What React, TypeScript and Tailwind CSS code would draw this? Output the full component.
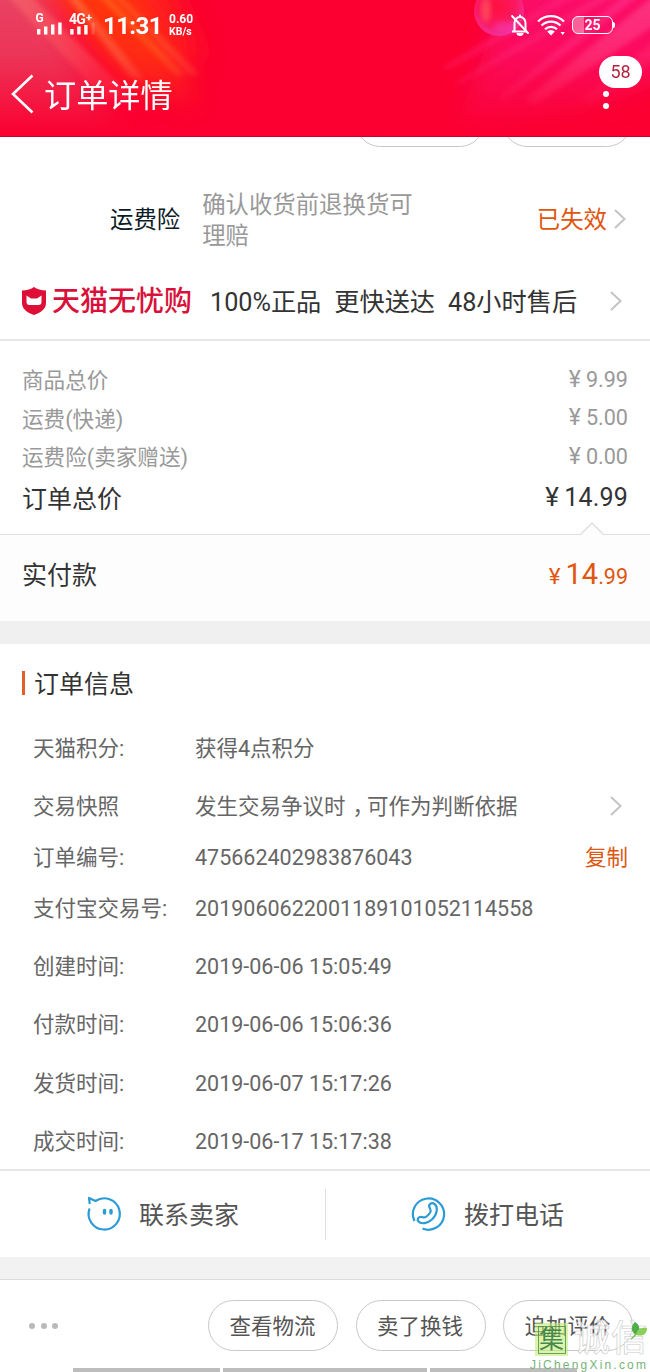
import type { ReactNode } from 'react'
import clsx from 'clsx'

interface PriceLine {
  label: string
  value: string
}

interface InfoLine {
  label: string
  value: ReactNode
  height: string
  action?: 'arrow' | 'copy'
}

const PRICES: PriceLine[] = [
  { label: '商品总价', value: '9.99' },
  { label: '运费(快递)', value: '5.00' },
  { label: '运费险(卖家赠送)', value: '0.00' },
]

const INFO: InfoLine[] = [
  { label: '天猫积分:', value: '获得4点积分', height: 'h-[58px]' },
  {
    label: '交易快照',
    // the comma sits in the middle of its cell
    value: (
      <>
        发生交易争议时<span className="relative left-[7px]">，</span>可作为判断依据
      </>
    ),
    height: 'h-[58px]',
    action: 'arrow',
  },
  { label: '订单编号:', value: '475662402983876043', height: 'h-11', action: 'copy' },
  { label: '支付宝交易号:', value: '2019060622001189101052114558', height: 'h-[58px]' },
  { label: '创建时间:', value: '2019-06-06 15:05:49', height: 'h-[58px]' },
  { label: '付款时间:', value: '2019-06-06 15:06:36', height: 'h-[58px]' },
  { label: '发货时间:', value: '2019-06-07 15:17:26', height: 'h-[59px]' },
  { label: '成交时间:', value: '2019-06-17 15:17:38', height: 'h-[57px]' },
]

const BUTTONS = ['查看物流', '卖了换钱', '追加评价']

function Arrow() {
  return (
    <svg width="12" height="20" viewBox="0 0 12 20" fill="none" stroke="#c4c4c4" strokeWidth="2" className="shrink-0">
      <path d="M1 1l9.5 9L1 19" />
    </svg>
  )
}

function HeaderArt() {
  return (
    <svg width="650" height="137" viewBox="0 0 650 137" className="absolute inset-0">
      <defs>
        <filter id="soft" x="-30%" y="-50%" width="160%" height="200%">
          <feGaussianBlur stdDeviation="12" />
        </filter>
        <filter id="thin" x="-20%" y="-20%" width="140%" height="140%">
          <feGaussianBlur stdDeviation="2.5" />
        </filter>
        <linearGradient id="fade" x1="0" y1="0" x2="0" y2="1">
          <stop offset="0" stopColor="#fff" />
          <stop offset="0.4" stopColor="#fff" stopOpacity="0.8" />
          <stop offset="1" stopColor="#fff" stopOpacity="0" />
        </linearGradient>
        <mask id="down">
          <rect width="650" height="137" fill="url(#fade)" />
        </mask>
        <radialGradient id="ball" cx="0.45" cy="0.4" r="0.6">
          <stop offset="0" stopColor="#ff1040" />
          <stop offset="0.65" stopColor="#fb1860" />
          <stop offset="1" stopColor="#f0309a" />
        </radialGradient>
      </defs>
      <rect width="650" height="137" fill="#fb0030" />
      <g mask="url(#down)">
        <g filter="url(#soft)">
          <path d="M-40 -40H24L120 137H-40Z" fill="#e84262" />
          <path d="M20 -40H130L200 110L130 90Z" fill="#ff3510" />
          <path d="M115 -40H160L205 60L175 60Z" fill="#ff1c1c" />
          <path d="M520 -40H700V70L520 137H450Z" fill="#fb0868" />
        </g>
        <g filter="url(#thin)">
          <path d="M6 -5H30L135 100L105 100Z" fill="#ff7a70" opacity="0.4" />
          <path d="M66 -5H76L145 80L130 76Z" fill="#ff8a50" opacity="0.5" />
          <path d="M98 -5H106L185 75L176 76Z" fill="#ff8a20" opacity="0.45" />
          <path d="M112 -5H120L200 75L190 75Z" fill="#ff7030" opacity="0.45" />
          <path d="M560 -5H580L450 70L440 68Z" fill="#ff2080" opacity="0.4" />
          <path d="M600 -5H616L460 85L454 83Z" fill="#ff3f90" opacity="0.35" />
          <path d="M625 -5H640L505 100L498 98Z" fill="#ff3f9a" opacity="0.45" />
          <path d="M655 -5V25L535 105L525 100Z" fill="#ff5aa0" opacity="0.45" />
          <path d="M655 40V60L590 105L580 100Z" fill="#ff4a90" opacity="0.3" />
        </g>
      </g>
      <circle cx="499" cy="11" r="25" fill="url(#ball)" />
      <ellipse cx="486" cy="10" rx="5" ry="12" fill="#ff7060" opacity="0.5" filter="url(#thin)" />
      <ellipse cx="506" cy="27" rx="13" ry="6" fill="#f440c0" opacity="0.45" filter="url(#thin)" />
    </svg>
  )
}

function StatusBar() {
  return (
    <div className="relative flex h-[50px] items-center justify-between pr-[35px] pl-[35px] text-white">
      <div className="flex items-center">
        <svg width="62" height="26" viewBox="0 0 62 26" fill="#fff" className="font-[Roboto,sans-serif] font-bold">
          <text x="0.500" y="9.500" fontSize="12">G</text>
          <text x="34" y="12" fontSize="14" letterSpacing="-0.8">4G</text>
          <text x="51" y="9" fontSize="11">+</text>
          <rect x="2" y="17" width="3.400" height="5.500" />
          <rect x="9" y="14.500" width="3.400" height="8" />
          <rect x="16" y="12.500" width="3.400" height="10" />
          <rect x="23.200" y="10.500" width="3.400" height="12" />
          <rect x="35.200" y="17" width="3.400" height="5.500" />
          <rect x="42.200" y="14.500" width="3.400" height="8" />
          <rect x="49.200" y="13" width="3.400" height="9.500" />
          <rect x="56.500" y="10.500" width="3.400" height="12" opacity="0.15" />
        </svg>
        <span className="ml-1.5 w-[66px] pt-0.5 text-[24px] leading-7 font-bold tracking-[-0.600px]">11:31</span>
        <span className="pt-px text-[12px] leading-[12px] font-bold">
          0.60
          <br />
          <span className="text-[10.500px]">KB/s</span>
        </span>
      </div>
      <div className="flex items-center gap-[7px]">
        <svg width="20" height="24" viewBox="0 0 20 24" fill="none" stroke="#fff" strokeWidth="2">
          <path d="M4.500 18V10a5.500 6 0 0 1 11 0v8M2 18.500h15" />
          <path d="M10 4V2.500M2 3l16 17" strokeLinecap="round" />
          <path d="M6.500 20a3.500 3 0 0 0 7 0z" fill="#fff" stroke="none" />
        </svg>
        <svg width="28" height="22" viewBox="0 0 28 22" fill="none" stroke="#fff" strokeWidth="2.200">
          <path d="M1 7.500a18.500 18.500 0 0 1 26 0M4.500 11.500a13.500 13.500 0 0 1 19 0M8 15.300a8.600 8.600 0 0 1 12 0" />
          <path d="M14 21.500l-3.800-4a5.400 5.400 0 0 1 7.600 0zM23.500 18h4.400l-2.200 3z" fill="#fff" stroke="none" />
        </svg>
        <div className="flex items-center">
          <div className="flex h-[18px] w-[41px] items-center justify-center rounded-md border-[1.500px] border-white bg-linear-to-r from-white/35 from-28% to-transparent to-28% text-[14px] leading-4 font-bold">
            25
          </div>
          <div className="h-1.5 w-0.5 rounded-r-sm bg-white" />
        </div>
      </div>
    </div>
  )
}

function Header() {
  return (
    <header className="relative h-[137px] overflow-hidden border-b border-[#c9002c] bg-[#fb0030]">
      <HeaderArt />
      <StatusBar />
      <div className="relative flex h-[86px] items-start pr-[8px] pl-[11px] text-white">
        <svg width="23" height="40" viewBox="0 0 23 40" fill="none" stroke="#fff" strokeWidth="2.600" className="mt-6">
          <path d="M21.500 1.500L2 20l19.500 18.500" />
        </svg>
        <h1 className="mt-[26px] ml-2.5 text-[32.200px] leading-10">订单详情</h1>
        <div className="mt-1.5 ml-auto flex flex-col">
          <div className="flex h-8 w-[43px] items-center justify-center rounded-full bg-white text-lg text-[#b52240]">58</div>
          <div className="mt-[3px] ml-1 flex flex-col gap-1.5">
            <i className="size-1.5 rounded-full bg-white" />
            <i className="size-1.5 rounded-full bg-white" />
          </div>
        </div>
      </div>
    </header>
  )
}

function PillButton({ children }: { children?: ReactNode }) {
  return (
    <div className="flex h-[51px] w-[130px] shrink-0 items-center justify-center rounded-full border border-[#c8c8c8] pt-0.5 pr-px text-[21.500px] leading-6">
      {children}
    </div>
  )
}

function Insurance() {
  return (
    <div className="flex h-[116px] items-center pt-[31px] pr-[24px] pl-[110px] text-[23.400px]">
      <span className="text-[#0c1c26]">运费险</span>
      <p className="ml-[22px] w-[216px] leading-[31px] text-[#999]">确认收货前退换货可理赔</p>
      <span className="mr-[7px] ml-auto text-[#e0560f]">已失效</span>
      <span className="-mt-1">
        <Arrow />
      </span>
    </div>
  )
}

function Guarantee() {
  return (
    <div className="flex h-[78px] items-center border-b-2 border-[#e6e6e6] pr-[28px] pl-[21px]">
      <svg width="26" height="28" viewBox="0 0 26 28">
        <path d="M13 0C16 2.400 20 3.400 25 3.600V16c0 6-5 9.600-12 12C6 25.600 1 22 1 16V3.600C6 3.400 10 2.400 13 0z" fill="#dd0f36" />
        <path d="M5.500 8.500l4.500 3h6l4.500-3V15q0 3-3 3h-9q-3 0-3-3z" fill="#fff" />
      </svg>
      <span className="ml-[5px] w-[158px] pt-0.5 text-[28px] leading-8 font-medium text-[#d9113a]">天猫无忧购</span>
      <span className="flex gap-[13px] pt-1 text-[25.200px] leading-8 whitespace-nowrap text-[#333]">
        <span>100%正品</span>
        <span>更快送达</span>
        <span>48小时售后</span>
      </span>
      <span className="ml-auto">
        <Arrow />
      </span>
    </div>
  )
}

function PriceSummary() {
  return (
    <section className="h-[193px] px-[22px] pt-[21px]">
      {PRICES.map((p) => (
        <div key={p.label} className="flex h-[38.600px] items-center justify-between text-[21.600px] leading-8 text-[#999]">
          <span>{p.label}</span>
          <span className="flex items-baseline pb-[3px]">
            <span className="mr-[5px] text-[23px]">¥</span>
            {p.value}
          </span>
        </div>
      ))}
      <div className="flex h-[40px] items-center justify-between text-[25px] leading-8 text-[#333]">
        <span className="pt-1">订单总价</span>
        <span className="flex items-baseline tracking-[0.200px]">
          <span className="mr-[5px] text-[26px]">¥</span>14.99
        </span>
      </div>
    </section>
  )
}

function Paid() {
  return (
    <section className="relative flex h-[87px] items-center justify-between border-t border-[#dedede] bg-[#fdfdfd] px-[22px] pb-1">
      <svg width="26" height="14" viewBox="0 0 26 14" className="absolute -top-[13px] left-[579px]">
        <path d="M1 13L13 1l12 12v1H1z" fill="#fdfdfd" />
        <path d="M1 13L13 1l12 12" fill="none" stroke="#dedede" strokeWidth="1.400" />
      </svg>
      <span className="text-[25px] leading-8 text-[#333]">实付款</span>
      <span className="flex items-baseline pb-0.5 text-[21.500px] leading-8 text-[#e0560f]">
        <span className="mr-[5px] text-[22.500px]">¥</span>
        <span className="text-[29px]">14</span>.99
      </span>
    </section>
  )
}

function OrderInfo() {
  return (
    <section className="h-[527px] border-b-2 border-[#e6e6e6]">
      <div className="flex h-[76px] items-center pl-[22px]">
        <i className="mt-0.5 h-6 w-[3px] bg-[#e0602a]" />
        <h2 className="ml-[9px] pt-[5px] text-[25px] leading-8 text-[#333]">订单信息</h2>
      </div>
      {INFO.map((row) => (
        <div key={row.label} className={clsx('flex items-center pl-[33px] text-[21.500px] leading-8 text-[#666]', row.height)}>
          <span className="w-[162px]">{row.label}</span>
          <span className="whitespace-nowrap">{row.value}</span>
          {row.action === 'arrow' && (
            <span className="mr-[28px] mb-0.5 ml-auto">
              <Arrow />
            </span>
          )}
          {row.action === 'copy' && <span className="mr-[22px] ml-auto text-[#e0560f]">复制</span>}
        </div>
      ))}
    </section>
  )
}

function ContactBar() {
  return (
    <div className="flex h-[86px] items-center text-[25px] leading-8 text-[#555]">
      <div className="flex h-full flex-1 items-center pl-[85px]">
        <svg width="38" height="38" viewBox="0 0 38 38" fill="none" stroke="#2a9bd6" strokeWidth="2.200">
          <path d="M4.600 13.500A15.600 15.600 0 1 0 10.500 6L4 3l.8 6" strokeLinejoin="round" />
          <path d="M19.500 15.500v2.500M26 15.500v2.500" strokeWidth="3.400" strokeLinecap="round" />
        </svg>
        <span className="ml-4 pt-[3px]">联系卖家</span>
      </div>
      <div className="h-[51px] w-px bg-[#e0e0e0]" />
      <div className="flex h-full flex-1 items-center pl-[84px]">
        <svg width="38" height="38" viewBox="0 0 38 38" fill="none" stroke="#2a9bd6" strokeWidth="2.200">
          <path d="M4.500 26A15.600 15.600 0 1 1 12.500 33.500" />
          <path d="M19.500 12.500c-1.500-3 2-5.500 5-3.500 4 3 2.500 11-2.500 15.500-4.500 4-11 5-13.500 2-2-2.500.5-5.500 3.500-4.500 1.800.6 2.500 1.200 4.500-.5 3.200-2.600 4.800-4.500 4-6.500-.3-1-.6-1.500-1-2.500z" strokeLinejoin="round" />
        </svg>
        <span className="ml-4 pt-[3px]">拨打电话</span>
      </div>
    </div>
  )
}

function Watermark() {
  return (
    <div className="absolute right-0 bottom-0 h-[50px] w-[122px]">
      <div className="flex items-center pl-[7px]">
        <div className="flex size-[33px] items-center justify-center bg-[#c3ec74]/60">
          <span className="flex size-[28px] items-center justify-center border-[1.500px] border-[#4c8a4a]/80 text-[25px] leading-6 text-[#357a43]/90">
            集
          </span>
        </div>
        <span className="ml-1.5 text-[36px] leading-[35px] font-medium tracking-[1px] text-white/70 [-webkit-text-stroke:0.600px_#c8c8c8]">
          诚信
        </span>
      </div>
      <svg width="18" height="20" viewBox="0 0 18 20" className="absolute top-0 right-0.5">
        <path d="M6 13C0 9 1 4 5 0c5 3 6 8 1 13z" fill="#4fae48" />
        <path d="M6 13C7 7 11 5 17 6c0 6-4 9-11 7z" fill="#8bd05a" />
        <path d="M6 12q-2 3-5 5" stroke="#7cc25a" strokeWidth="1.500" fill="none" />
      </svg>
      <p className="pl-[2px] font-['Liberation_Sans',sans-serif] text-[12px] leading-[17px] tracking-[2.200px] whitespace-nowrap text-[#76b37a]">
        JiChengXin.com
      </p>
    </div>
  )
}

function Footer() {
  return (
    <footer className="relative flex h-[93px] flex-col justify-between border-t border-[#dcdcdc] bg-white">
      <div className="flex items-center pt-5 pl-[29px]">
        <div className="flex w-[179px] gap-[5.500px]">
          <i className="size-1.5 rounded-full bg-[#b9b9b9]" />
          <i className="size-1.5 rounded-full bg-[#b9b9b9]" />
          <i className="size-1.5 rounded-full bg-[#b9b9b9]" />
        </div>
        <div className="flex gap-[17.500px] text-[#555]">
          {BUTTONS.map((label) => (
            <PillButton key={label}>{label}</PillButton>
          ))}
        </div>
      </div>
      <div className="flex gap-[3px] pl-[73px]">
        <i className="h-1 w-[147px] bg-[#bdbdbd]" />
        <i className="h-1 w-[204px] bg-[#bdbdbd]" />
        <i className="h-1 w-[147px] bg-[#bdbdbd]" />
      </div>
      <Watermark />
    </footer>
  )
}

export default function App() {
  return (
    <main
      lang="zh-CN"
      className="h-[1372px] w-[650px] overflow-hidden bg-white font-[Roboto,'Noto_Sans_CJK_SC',sans-serif]"
    >
      <Header />
      {/* Tail of the previous item's buttons, scrolled under the header */}
      <div className="flex h-[10px] items-end justify-end gap-[17.500px] overflow-hidden pr-[18px]">
        <PillButton />
        <PillButton />
      </div>
      <Insurance />
      <Guarantee />
      <PriceSummary />
      <Paid />
      <div className="h-[23px] bg-[#f0f0f0]" />
      <OrderInfo />
      <ContactBar />
      <div className="h-[22px] bg-[#f2f2f2]" />
      <Footer />
    </main>
  )
}
